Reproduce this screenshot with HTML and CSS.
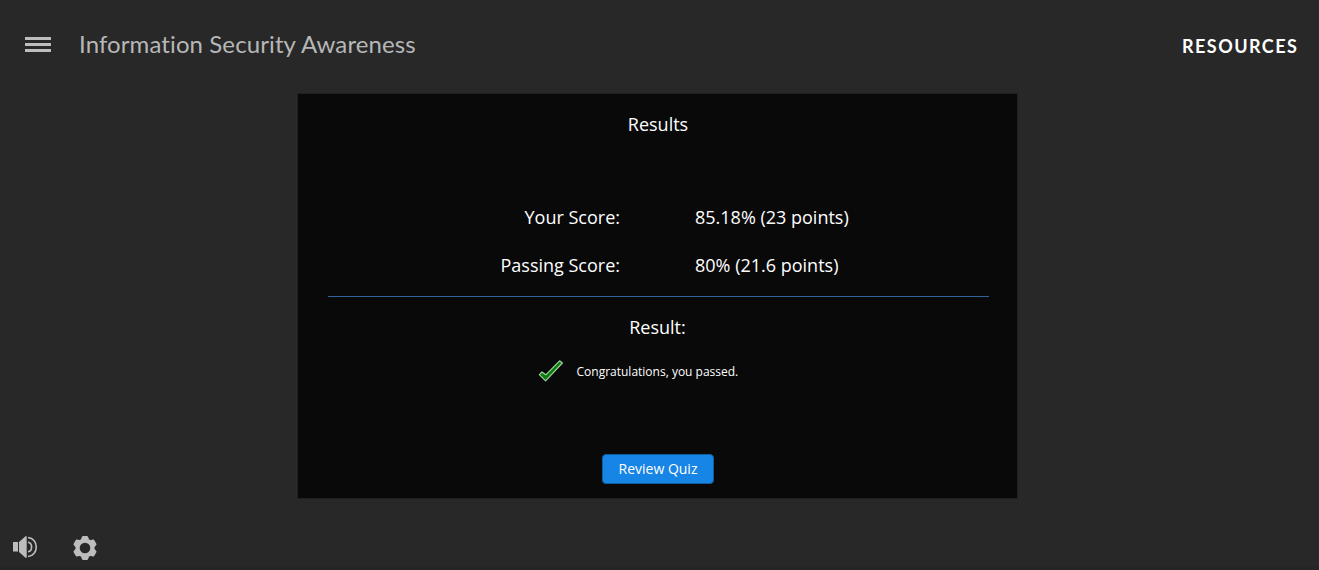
FILE: index.html
```html
<!DOCTYPE html>
<html lang="en">
<head>
<meta charset="utf-8">
<title>Information Security Awareness</title>
<link rel="stylesheet" href="styles.css">
</head>
<body>
<header class="topbar">
  <button class="menu" aria-label="Menu"><svg width="26" height="15" viewBox="0 0 26 15"><path d="M0 1.5H26M0 7.5H26M0 13.5H26" stroke="#bdbdbd" stroke-width="3"/></svg></button>
  <h1 class="title">Information Security Awareness</h1>
  <a class="resources">RESOURCES</a>
</header>
<main class="slide">
  <h2 class="heading">Results</h2>
  <dl class="scores">
    <dt>Your Score:</dt><dd>85.18% (23 points)</dd>
    <dt>Passing Score:</dt><dd>80% (21.6 points)</dd>
  </dl>
  <div class="rule"></div>
  <h3 class="result">Result:</h3>
  <div class="outcome">
    <svg class="check" width="26" height="24" viewBox="0 0 26 24"><path d="M1.3 15.6L4 13L7.8 15.8L21.6 1.8L24.4 4L7.6 21.8Z" fill="#088008" stroke="#a9cfa9" stroke-width="1.1" stroke-linejoin="round"/></svg>
    <span>Congratulations, you passed.</span>
  </div>
  <button class="review">Review Quiz</button>
</main>
<footer class="controls">
  <svg class="volume" width="25" height="22" viewBox="0 0 25 22"><path d="M0 6H5V15.6H0ZM6 6L12.5 0.3H13.7V21.7H12.5L6 16Z" fill="#bdbdbd"/><path d="M15 6.2C19.8 6.8 19.8 15.2 15 15.8M15 1.5C26 2.5 26 19.5 15 20.5" fill="none" stroke="#bdbdbd" stroke-width="1.6"/></svg>
  <svg class="gear" width="24" height="24" viewBox="0 0 24 24"><path fill="#bdbdbd" stroke="#bdbdbd" stroke-width="2.6" stroke-linejoin="round" d="M10.2 1.3H13.8L15.1 4.4L17.2 5.5L20.2 4.8L22.2 8.3L20.2 10.8V13.2L22.2 15.7L20.2 19.2L17.2 18.5L15.1 19.6L13.8 22.7H10.2L8.9 19.6L6.8 18.5L3.8 19.2L1.8 15.7L3.8 13.2V10.8L1.8 8.3L3.8 4.8L6.8 5.5L8.9 4.4Z"/><circle cx="12" cy="12" r="5.3" fill="#282828"/></svg>
</footer>
</body>
</html>
```

FILE: styles.css
```css
* { box-sizing: border-box; }
body { margin: 0; width: 1319px; height: 570px; overflow: hidden; background: #282828; color: #fff; font-family: "Open Sans", sans-serif; display: flex; flex-direction: column; align-items: center; }
button { border: 0; background: none; padding: 0; color: inherit; font: inherit; }
.topbar { width: 100%; height: 93px; flex: none; display: flex; align-items: flex-start; padding: 28px 20px 0 25px; font-family: Lato, sans-serif; }
.menu { height: 15px; margin-top: 9px; display: flex; }
.title { margin: 0 0 0 28px; font-size: 24px; line-height: 32px; font-weight: 400; color: #b7b7b7; white-space: nowrap; font-variant-ligatures: none; letter-spacing: 0.1px; }
.resources { margin: 1px 0.7px 0 auto; font-size: 18px; line-height: 34px; font-weight: 700; letter-spacing: 1.45px; }
.slide { width: 721px; height: 406px; flex: none; margin-right: 4px; background: #090909; border: 1px solid #202020; display: flex; flex-direction: column; align-items: center; font-size: 18px; }
.heading, .result { margin: 0; font-size: 18px; font-weight: 400; line-height: 24px; }
.heading { margin: 18px 0 0 1px; }
.scores { margin: 57px 0 0; width: 100%; display: grid; grid-template-columns: 322px 1fr; column-gap: 75px; grid-auto-rows: 48px; line-height: 48px; }
.scores dt { text-align: right; }
.scores dd { margin: 0; }
.rule { width: 661px; height: 1px; margin: 7px 0 0 2px; background: #30639a; }
.result { margin-top: 18px; }
.outcome { margin: 20px 0 0; width: 100%; height: 24px; padding-left: 240px; display: flex; align-items: center; gap: 12.5px; font-size: 12px; }
.review { width: 112px; height: 30px; margin-top: 70.5px; padding-left: 1px; background: #1785e5; border: 1px solid #10609f; border-radius: 4px; font-size: 14px; }
.controls { width: 100%; height: 71px; padding: 37px 0 0 13px; display: flex; align-items: flex-start; gap: 35px; border-bottom: 4px solid #262526; }
```
